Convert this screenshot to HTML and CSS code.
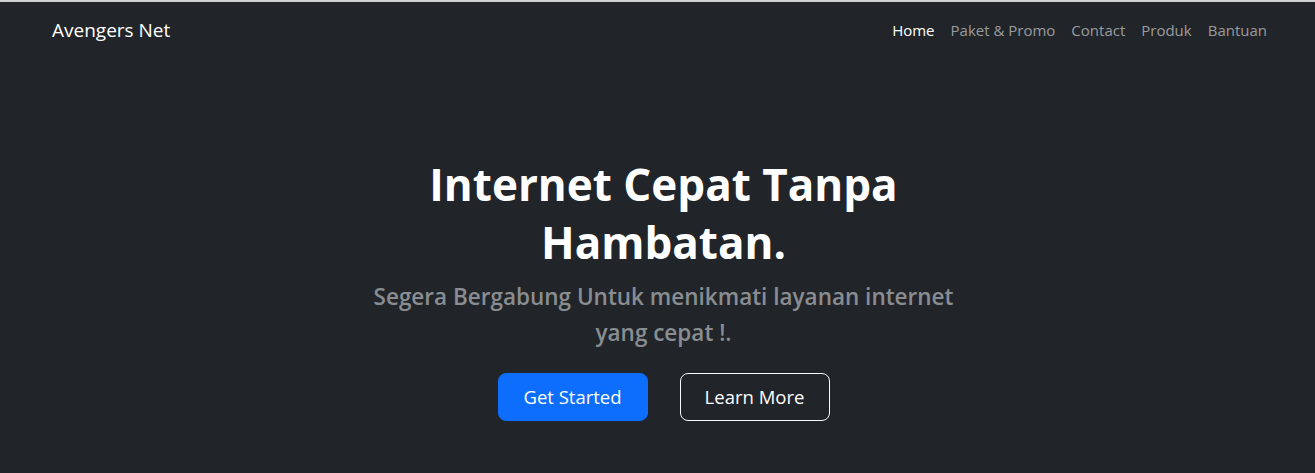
FILE: index.html
```html
<!DOCTYPE html>
<html lang="id">
<head>
<meta charset="utf-8">
<title>Avengers Net</title>
<link rel="stylesheet" href="styles.css">
</head>
<body>
<header class="navbar">
  <a class="brand" href="#">Avengers Net</a>
  <nav class="nav">
    <a class="nav-link active" href="#">Home</a>
    <a class="nav-link" href="#">Paket &amp; Promo</a>
    <a class="nav-link" href="#">Contact</a>
    <a class="nav-link" href="#">Produk</a>
    <a class="nav-link" href="#">Bantuan</a>
  </nav>
</header>
<main class="hero">
  <div class="hero-inner">
    <h1 class="hero-title">Internet Cepat Tanpa Hambatan.</h1>
    <p class="lead">Segera Bergabung Untuk menikmati layanan internet yang cepat !.</p>
    <div class="actions">
      <a class="btn btn-primary" href="#">Get Started</a>
      <a class="btn btn-outline" href="#">Learn More</a>
    </div>
  </div>
</main>
</body>
</html>
```
FILE: styles.css
```css
* { box-sizing: border-box; }
html, body { height: 100%; }
body {
  margin: 0;
  background: #212529;
  border-top: 2px solid #cfd0d1;
  font-family: "Open Sans", "Noto Sans", sans-serif;
  color: #fff;
}
a { text-decoration: none; }
.navbar {
  display: flex;
  align-items: center;
  justify-content: space-between;
  padding: 8px 40px 8px 52px;
  height: 56px;
}
.brand {
  color: #fff;
  font-size: 19px;
  line-height: 30px;
  padding: 5px 0;
}
.nav { display: flex; }
.nav-link {
  color: #9a9b9d;
  font-size: 15px;
  line-height: 24px;
  padding: 8px 8px;
}
.nav-link.active { color: #fff; }
.hero {
  display: flex;
  justify-content: center;
  padding: 98px 0 0 12px;
}
.hero-inner {
  width: 610px;
  text-align: center;
}
.hero-title {
  margin: 0 0 8px;
  font-size: 44px;
  line-height: 57.6px;
  font-weight: 700;
}
.lead {
  margin: 0 0 22px;
  font-size: 22.5px;
  line-height: 36px;
  font-weight: 600;
  color: #898d92;
}
.actions {
  display: flex;
  justify-content: center;
  gap: 32px;
}
.btn {
  display: inline-block;
  width: 150px;
  padding: 8px 0;
  font-size: 18.5px;
  line-height: 30px;
  border-radius: 8px;
  border: 1px solid transparent;
  color: #fff;
  text-align: center;
}
.btn-primary { background: #0d6efd; border-color: #0d6efd; }
.btn-outline { border-color: #f8f9fa; }
```
